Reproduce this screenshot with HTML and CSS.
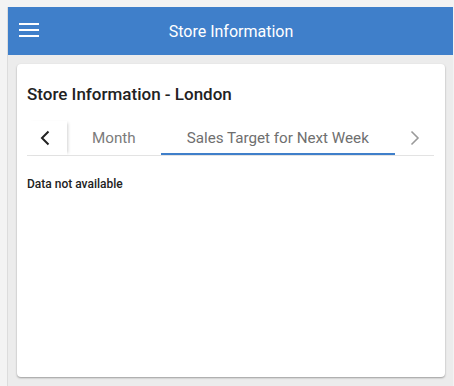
FILE: index.html
```html
<!DOCTYPE html>
<html lang="en">
<head>
    <meta charset="UTF-8">
    <meta name="viewport" content="width=device-width, initial-scale=1.0">
    <title>Store Information</title>
    <link rel="stylesheet" href="styles.css">
</head>
<body>
    <div class="app">
        <header class="toolbar">
            <button class="menu-button" aria-label="Menu">
                <svg width="20" height="14" viewBox="0 0 20 14">
                    <rect x="0" y="0" width="20" height="2" fill="#fff"/>
                    <rect x="0" y="6" width="20" height="2" fill="#fff"/>
                    <rect x="0" y="12" width="20" height="2" fill="#fff"/>
                </svg>
            </button>
            <div class="toolbar-title">Store Information</div>
        </header>

        <div class="content">
            <div class="card">
                <h2 class="card-title">Store Information - London</h2>
                <div class="tabs">
                    <button class="tab-arrow left" aria-label="Previous">
                        <svg width="10" height="16" viewBox="0 0 10 16">
                            <path d="M8.5 1.5 L2 8 L8.5 14.5" fill="none" stroke="#222" stroke-width="2"/>
                        </svg>
                    </button>
                    <div class="tab-list">
                        <div class="tab">Month</div>
                        <div class="tab active">Sales Target for Next Week</div>
                    </div>
                    <button class="tab-arrow right" aria-label="Next">
                        <svg width="10" height="16" viewBox="0 0 10 16">
                            <path d="M1.5 1.5 L8 8 L1.5 14.5" fill="none" stroke="#9a9a9a" stroke-width="1.6"/>
                        </svg>
                    </button>
                </div>
                <p class="empty">Data not available</p>
            </div>
        </div>
    </div>
</body>
</html>
```

FILE: styles.css
```css
html, body { height: 100%; }
body { margin: 0; padding: 7px 0 0 7px; box-sizing: border-box; background: #f3f3f3; font-family: Roboto, "Liberation Sans", sans-serif; overflow: hidden; }
.app { width: 445px; height: 100%; border-left: 1px solid #dcdcdc; background: #ececec; display: flex; flex-direction: column; }
.toolbar { height: 48px; background: #3f7fca; display: flex; align-items: center; position: relative; flex-shrink: 0; }
.menu-button { background: none; border: none; padding: 0 0 2px 11px; height: 48px; display: flex; align-items: center; cursor: pointer; }
.toolbar-title { position: absolute; left: 0; right: 0; text-align: center; color: #fff; font-size: 16px; pointer-events: none; padding-left: 1px; }
.content { flex: 1; padding: 9px 8px 9px 9px; display: flex; }
.card { flex: 1; background: #fff; border-radius: 4px; box-shadow: 0 1px 2px rgba(0, 0, 0, 0.35); padding: 0 11px 0 10px; }
.card-title { margin: 20px 0 0; font-size: 17px; font-weight: 500; color: #222; line-height: 20px; }
.tabs { display: flex; align-items: stretch; height: 34px; margin-top: 17px; border-bottom: 1px solid #e3e3e3; }
.tab-arrow { width: 40px; border: none; background: #fff; padding: 0; display: flex; align-items: center; justify-content: center; cursor: pointer; }
.tab-arrow.left { box-shadow: 3px 0 3px -2px rgba(0, 0, 0, 0.18); position: relative; z-index: 1; padding: 0 4px 0 0; }
.tab-arrow.right { width: 39px; }
.tab-list { flex: 1; display: flex; overflow: hidden; }
.tab { padding: 2px 25px 0 25px; display: flex; align-items: center; font-size: 15.2px; color: #7b7b7b; white-space: nowrap; border-bottom: 2px solid transparent; }
.tab.active { padding: 2px 26px 0 26px; color: #6f6f6f; border-bottom-color: #3f7fca; }
.empty { margin: 21px 0 0; font-size: 12px; font-weight: 500; color: #222; }
```
